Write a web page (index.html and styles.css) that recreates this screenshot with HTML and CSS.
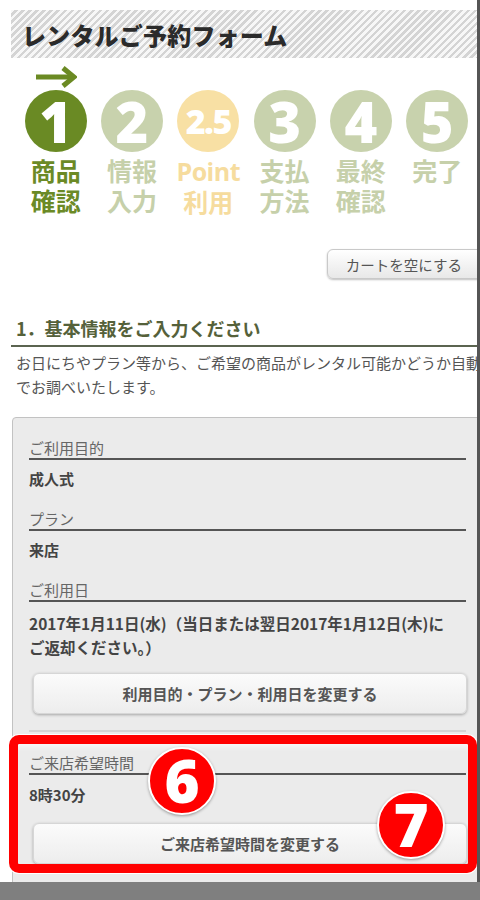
FILE: index.html
```html
<!DOCTYPE html>
<html lang="ja">
<head>
    <meta charset="UTF-8">
    <meta name="viewport" content="width=device-width, initial-scale=1.0">
    <title>レンタルご予約フォーム</title>
    <link rel="stylesheet" href="styles.css">
</head>
<body>
    <div class="screen">
        <div class="page">
            <div class="title-bar">
                <h1>レンタルご予約フォーム</h1>
            </div>

            <div class="steps">
                <div class="step current">
                    <div class="step-mark">
                        <svg width="42" height="22" viewBox="0 0 42 22">
                            <path d="M1 11 H37" stroke="#6b8a23" stroke-width="5" fill="none"/>
                            <path d="M28 2 L39 11 L28 20" stroke="#6b8a23" stroke-width="5" fill="none" stroke-linejoin="miter"/>
                        </svg>
                    </div>
                    <div class="step-num">1</div>
                    <div class="step-label">商品<br>確認</div>
                </div>
                <div class="step">
                    <div class="step-mark"></div>
                    <div class="step-num">2</div>
                    <div class="step-label">情報<br>入力</div>
                </div>
                <div class="step point">
                    <div class="step-mark"></div>
                    <div class="step-num small">2.5</div>
                    <div class="step-label"><span class="latin">Point</span><br>利用</div>
                </div>
                <div class="step">
                    <div class="step-mark"></div>
                    <div class="step-num">3</div>
                    <div class="step-label">支払<br>方法</div>
                </div>
                <div class="step">
                    <div class="step-mark"></div>
                    <div class="step-num">4</div>
                    <div class="step-label">最終<br>確認</div>
                </div>
                <div class="step">
                    <div class="step-mark"></div>
                    <div class="step-num">5</div>
                    <div class="step-label">完了</div>
                </div>
            </div>

            <div class="cart-row">
                <button type="button" class="btn-cart">カートを空にする</button>
            </div>

            <h2 class="section-title">1．基本情報をご入力ください</h2>
            <p class="lead">お日にちやプラン等から、ご希望の商品がレンタル可能かどうか自動でお調べいたします。</p>

            <div class="card">
                <div class="field-label first">ご利用目的</div>
                <div class="field-value">成人式</div>

                <div class="field-label">プラン</div>
                <div class="field-value">来店</div>

                <div class="field-label">ご利用日</div>
                <div class="field-value date">2017年1月11日(水)（当日または翌日2017年1月12日(木)に<br>ご返却ください。）</div>

                <button type="button" class="btn-change">利用目的・プラン・利用日を変更する</button>

                <div class="divider"></div>

                <div class="field-label after-divider">ご来店希望時間</div>
                <div class="field-value time">8時30分</div>

                <button type="button" class="btn-change last">ご来店希望時間を変更する</button>
            </div>
        </div>

        <div class="callout-frame"></div>
        <div class="badge badge-6">6</div>
        <div class="badge badge-7">7</div>
    </div>
</body>
</html>
```

FILE: styles.css
```css
* {
    margin: 0;
    padding: 0;
    box-sizing: border-box;
}

body {
    background-color: #7f7f7f;
    font-family: "Noto Sans CJK JP", "Noto Sans", sans-serif;
    color: #444;
}

.screen {
    position: relative;
    width: 480px;
    height: 882px;
    overflow: hidden;
    background-color: #fff;
    border-right: 3px solid #555;
}

.page {
    width: 483px;
    padding: 10px 0 0 12px;
}

/* header */
.title-bar {
    margin-left: -1px;
    height: 48px;
    display: flex;
    align-items: center;
    padding-left: 11px;
    background: repeating-linear-gradient(135deg, #f7f7f7 0 2.5px, #d4d4d4 2.5px 5px);
}

.title-bar h1 {
    font-size: 24px;
    font-weight: 900;
    color: #2b2b2b;
    letter-spacing: 0.2px;
}

/* steps */
.steps {
    display: grid;
    grid-template-columns: repeat(6, 76.3px);
    margin-left: 5.5px;
    padding-top: 7px;
}

.step {
    display: flex;
    flex-direction: column;
    align-items: center;
    color: #c6d0aa;
}

.step-mark {
    height: 25px;
    display: flex;
    justify-content: center;
    padding-top: 1px;
}

.step-num {
    width: 62px;
    height: 62px;
    border-radius: 50%;
    background-color: #c8d2ad;
    color: #fff;
    font-family: "Open Sans", "Liberation Sans", sans-serif;
    font-weight: 800;
    font-size: 56px;
    line-height: 62px;
    text-align: center;
}

.step-num.small {
    font-size: 34px;
    letter-spacing: -1.5px;
}

.step-label {
    margin-top: 3px;
    font-size: 25px;
    font-weight: 700;
    line-height: 30px;
    text-align: center;
}

.step-label .latin {
    font-family: "Open Sans", "Liberation Sans", sans-serif;
    font-size: 25px;
    letter-spacing: -0.5px;
}

.step.current {
    color: #6b8a26;
}

.step.current .step-num {
    background-color: #6a8a24;
}

.step.point {
    color: #f6dc9e;
}

.step.point .step-num {
    background-color: #f8e0a4;
}

/* cart button */
.cart-row {
    display: flex;
    justify-content: flex-end;
    margin-top: 33px;
    margin-right: -6px;
}

.btn-cart {
    height: 30px;
    padding: 0 26px 0 18px;
    font-family: "Noto Sans CJK JP", sans-serif;
    font-size: 14.5px;
    color: #555;
    border: 1px solid #c9c9c9;
    border-radius: 6px;
    background: linear-gradient(#ffffff, #e8e8e8);
    box-shadow: 0 1px 2px rgba(0, 0, 0, 0.25);
}

/* section */
.section-title {
    margin: 35px 0 0 -1px;
    padding: 0 0 3px 5px;
    font-size: 18px;
    font-weight: 700;
    line-height: 28px;
    color: #55613a;
    border-bottom: 2px solid #5b6450;
}

.lead {
    margin-top: 4px;
    padding-left: 4px;
    font-size: 15px;
    line-height: 24px;
    color: #555;
}

/* card */
.card {
    margin-top: 18px;
    padding: 20px 16px 40px 16px;
    background-color: #ebebeb;
    border: 1px solid #c2c2c2;
    border-radius: 4px 4px 0 0;
}

.field-label {
    margin-top: 18px;
    font-size: 15px;
    line-height: 20px;
    color: #666;
    border-bottom: 2px solid #555;
}

.field-label.first {
    margin-top: 0;
}

.field-label.after-divider {
    margin-top: 21px;
}

.field-value {
    margin-top: 7px;
    font-size: 15px;
    font-weight: 700;
    line-height: 24px;
    color: #444;
}

.field-value.date {
    margin-top: 9px;
    font-size: 15.5px;
}

.field-value.time {
    margin-top: 8px;
}

.btn-change {
    display: block;
    width: 434px;
    height: 41px;
    margin: 14px 0 0 4px;
    font-family: "Noto Sans CJK JP", sans-serif;
    font-size: 15px;
    font-weight: 700;
    color: #555;
    border: 1px solid #d6d6d6;
    border-radius: 6px;
    background: linear-gradient(#fbfbfb, #ededed);
    box-shadow: 0 1px 3px rgba(0, 0, 0, 0.3);
}

.btn-change.last {
    margin-top: 16px;
}

.divider {
    margin-top: 16px;
    height: 2px;
    background-color: #d4d4d4;
}

/* annotation overlay */
.callout-frame {
    position: absolute;
    left: 9px;
    top: 735px;
    width: 468px;
    height: 138px;
    border: 9px solid #ff0000;
    border-radius: 10px;
    box-shadow: 0 0 0 1px #fff, inset 0 6px 6px -4px rgba(255, 255, 255, 0.8);
}

.badge {
    position: absolute;
    width: 68px;
    height: 68px;
    border-radius: 50%;
    background-color: #ff0000;
    border: 2px solid #fff;
    box-shadow: 0 1px 3px rgba(0, 0, 0, 0.35);
    color: #fff;
    font-family: "Open Sans", "Liberation Sans", sans-serif;
    font-weight: 800;
    font-size: 60px;
    line-height: 63px;
    text-align: center;
}

.badge-6 {
    left: 148px;
    top: 747px;
}

.badge-7 {
    left: 377px;
    top: 791px;
}
```
